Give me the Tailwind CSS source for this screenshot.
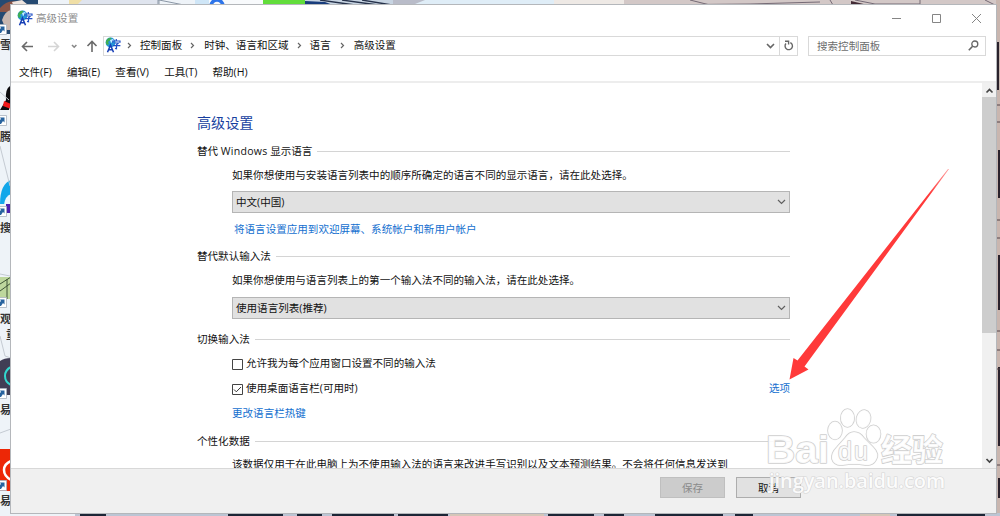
<!DOCTYPE html>
<html lang="zh-CN">
  <head>
    <meta charset="UTF-8" />
    <meta name="viewport" content="width=device-width, initial-scale=1.0" />
    <title>高级设置</title>
    <script src="https://cdn.jsdelivr.net/npm/@tailwindcss/browser@4"></script>
  </head>
  <body
    class="relative w-[1000px] h-[516px] overflow-hidden bg-[#eef3f8] font-['Open_Sans','Noto_Sans_CJK_SC',sans-serif] text-[10.55px] leading-4 text-[#111] whitespace-nowrap"
  >
    <!-- desktop behind the window -->
    <svg class="absolute inset-0" width="1000" height="516" viewBox="0 0 1000 516">
      <rect width="38" height="34" fill="#264a72" />
      <path d="M0 8q10-12 24-3l6 7H0z" fill="#8a5446" />
      <path d="M12 2l10-2 6 5-14 2z" fill="#efe5df" />
      <path d="M2 20q3-9 9-10v20H6z" fill="#c9b7b0" />
      <rect x="38" width="31" height="6" fill="#eef3f8" />
      <path d="M69 0h89v6H69z" fill="#f0dfa6" />
      <path d="M82 0h76v6H76z" fill="#dfe4ee" />
      <path d="M158 0h1v6h-1zM159 0l30 6" stroke="#8b97a6" fill="none" />
      <rect x="195" width="14" height="6" fill="#cfe6f7" />
      <rect x="209" width="54" height="6" fill="#f8fafc" />
      <circle cx="217" cy="6" r="6" fill="none" stroke="#2d74ea" stroke-width="3.5" />
      <rect x="263" width="42" height="6" fill="#62dd3b" />
      <path d="M305 0h90v6h-90z" fill="#c7d4e2" />
      <path d="M305 1l20 1 8 3h-28z" fill="#183c7c" />
      <path d="M320 0l35 5M342 0l36 5M362 0l30 5" stroke="#26324b" stroke-width="1.3" />
      <path d="M393 0h38l-14 6h-24z" fill="#b9bcc9" />
      <path d="M425 0h129v6H410z" fill="#dfedf7" />
      <path d="M554 0h446v6H554z" fill="#d3c8c7" />
      <path d="M554 0h70v6h-70z" fill="#eee9e5" />
      <path d="M640 5l110-1 70-2M690 0l20 5M830 0l3 5M855 0l20 4h45v-4M985 0l10 5" stroke="#756a75" fill="none" />
      <path d="M851 1l17 4h-17z" fill="#432b35" />

      <path d="M10 86q-5 3-4 14l-6 10h11V86z" fill="#0b0b0e" />
      <path d="M4 101l7 3v5l-8-3z" fill="#f01819" />
      <path d="M11 106q-4 4-2 13l2 2z" fill="#f6f6f4" />
      <path d="M11 180q-11 4-11 24h11z" fill="#12a7ea" />
      <path d="M11 194q-6 2-7 11l7 7z" fill="#eef6fd" />
      <path d="M6 204h5v9H6z" fill="#4b1fb0" />
      <path d="M0 277h11v22H0z" fill="#bdd79d" />
      <path d="M0 284l11-7M0 291l11-8M7 279v20" stroke="#3e5537" fill="none" />
      <path d="M0 361q4-3 11-3v37H0z" fill="#403d55" />
      <path d="M11 367q-6 3-6 9t6 9" stroke="#32d7cf" stroke-width="2" fill="none" />
      <path d="M0 449h11v42H0z" fill="#ed2706" />
      <path d="M11 461q-7 3-7 9t7 10" stroke="#fff" stroke-width="2.5" fill="none" />
      <path d="M0 92l9 8M0 146l10 40M0 274l10 2M0 336l5 20 6 2M0 433l11-4" stroke="#c4cad2" fill="none" />
      <g id="shortcut">
        <path d="M0 115.500h6.500v10H0" fill="#fff" stroke="#aab3bf" stroke-width=".8" />
        <path d="M0 117.500h4.500v5L3 121l-2 3H0v-4l1-1z" fill="#27639f" />
      </g>
      <use href="#shortcut" y="91" />
      <use href="#shortcut" y="182" />
      <use href="#shortcut" y="273" />
      <use href="#shortcut" y="365" />
      <use href="#shortcut" y="-91" />
      <g font-size="11" font-weight="bold" fill="#333" font-family="'Noto Sans CJK SC', sans-serif">
        <text x="0" y="49">雪</text>
        <text x="0" y="141">腾</text>
        <text x="0" y="232">搜</text>
        <text x="0" y="323">观</text>
        <text x="6" y="339">重</text>
        <text x="0" y="414">易</text>
        <text x="0" y="505">易</text>
      </g>

      <!-- brick wall showing on the right -->
      <rect x="996" width="4" height="516" fill="#c9b6af" />
      <path
        d="M998 42v48M999 150v48M999 255v55M999 367v20M999 386v60M999 478v20"
        stroke="#2a222c"
        stroke-width="2"
      />
      <path d="M996 105h4M996 122h4M996 220h4M996 238h4M996 331h4M996 350h4M996 369h4M996 465h4" stroke="#54454a" />

      <rect y="513" width="1000" height="3" fill="#bcc5d4" />
      <path d="M0 513h75v3H0z" fill="#eef3f8" />
      <path
        d="M80 515h26M228 515h55M297 515h25M332 515h62M398 515h50M548 515h46M604 515h20M655 515h68M735 515h18M897 515h88"
        stroke="#1c2636"
        stroke-width="3"
      />
      <path d="M450 515h94M860 515h30" stroke="#d5c6b8" stroke-width="2" />
    </svg>

    <div class="absolute left-[10px] top-1 w-[987px] h-[510px] border border-[#b4b7bb] bg-white flex flex-col">
      <!-- title bar -->
      <header class="h-[26px] shrink-0 flex items-center pl-1.5 pr-[14px] text-[#8d8d8d]">
        <svg class="w-4 h-4" viewBox="0 0 16 16">
          <g id="lang">
            <circle cx="5.500" cy="5.500" r="4.900" fill="#2496d8" />
            <path d="M1.500 3q2-3 5-2L5 3.500 3 5l1 2-2 1Q0 6 1.500 3z" fill="#3fae52" />
            <path d="M5 3l3-1 1 2-3 2z" fill="#c4f0ff" />
            <path d="M2.500 15.200L5.500 8l3 7.200M3.600 12.700h3.900" fill="none" stroke="#163eb5" stroke-width="1.500" />
            <path
              d="M11.300 2v1.500M7.800 5.800V4h7.200v1.800M9.300 6h4L11.500 7.700v4.100l-1.500-.4M8 8.700h7.400"
              fill="none"
              stroke="#2350c6"
              stroke-width="1.200"
            />
          </g>
        </svg>
        <span class="ml-[3px]">高级设置</span>
        <div class="ml-auto flex items-center gap-[29px]">
          <svg class="w-[11px] h-[11px]" viewBox="0 0 11 11"><path d="M1 5.500h9" stroke="#858585" /></svg>
          <svg class="w-[11px] h-[11px]" viewBox="0 0 11 11"><path d="M1.500 1.500h8v8h-8z" fill="none" stroke="#858585" /></svg>
          <svg class="w-[11px] h-[11px]" viewBox="0 0 11 11"><path d="M1 1l9 9M10 1l-9 9" stroke="#858585" /></svg>
        </div>
      </header>

      <!-- navigation -->
      <nav class="h-[29px] shrink-0 flex items-center pl-2.5 pr-2.5">
        <svg class="w-[82px] h-5 shrink-0" viewBox="0 0 82 20" fill="none" stroke-width="1.600">
          <path d="M12 10.500H1.500M6 6l-4.500 4.500L6 15" stroke="#6a6a6a" />
          <path d="M27 10.500h10.500M33 6l4.500 4.500L33 15" stroke="#d5d5d5" />
          <path d="M51 9l2.200 2.200L55.400 9" stroke="#888" />
          <path d="M71 16V5.500M66.500 10L71 5.500l4.500 4.500" stroke="#6a6a6a" />
        </svg>
        <div class="w-[695px] h-5 border border-[#d9d9d9] flex items-center">
          <svg class="w-4 h-4 ml-px -mt-px" viewBox="0 0 16 16"><use href="#lang" /></svg>
          <svg class="w-[5px] h-[7px] ml-[6px] mr-2" viewBox="0 0 5 7"><path d="M1 1l2.500 2.500L1 6" fill="none" stroke="#666" stroke-width="1.200" /></svg>
          <span class="-mt-0.5">控制面板</span>
          <svg class="w-[5px] h-[7px] ml-2 mr-[9px]" viewBox="0 0 5 7"><path d="M1 1l2.500 2.500L1 6" fill="none" stroke="#666" stroke-width="1.200" /></svg>
          <span class="-mt-0.5">时钟、语言和区域</span>
          <svg class="w-[5px] h-[7px] mx-2" viewBox="0 0 5 7"><path d="M1 1l2.500 2.500L1 6" fill="none" stroke="#666" stroke-width="1.200" /></svg>
          <span class="-mt-0.5">语言</span>
          <svg class="w-[5px] h-[7px] ml-[9px] mr-[9px]" viewBox="0 0 5 7"><path d="M1 1l2.500 2.500L1 6" fill="none" stroke="#666" stroke-width="1.200" /></svg>
          <span class="-mt-0.5">高级设置</span>
          <svg class="w-[9px] h-[6px] ml-auto mr-1" viewBox="0 0 9 6"><path d="M1 1l3.500 3.500L8 1" fill="none" stroke="#666" stroke-width="1.600" /></svg>
          <div class="w-[18px] h-full border-l border-[#d9d9d9] flex items-center justify-center">
            <svg class="w-[10px] h-[11px]" viewBox="0 0 10 11">
              <path d="M6.300 2.600A3.700 3.700 0 1 1 2 3.500M1 1.200h3.600v3.400" fill="none" stroke="#666" stroke-width="1.400" />
            </svg>
          </div>
        </div>
        <div class="ml-[10px] w-[178px] h-5 border border-[#d9d9d9] flex items-center justify-between pl-2 pr-[6px] text-[#6d6d6d]">
          <span>搜索控制面板</span>
          <svg class="w-[11px] h-[11px]" viewBox="0 0 11 11">
            <circle cx="6.800" cy="4" r="3" fill="none" stroke="#666" stroke-width="1.300" />
            <path d="M4.600 6.200L.8 10.200" stroke="#666" stroke-width="1.600" />
          </svg>
        </div>
      </nav>

      <div class="h-[23px] shrink-0 border-b-2 border-[#ededed] flex items-center gap-[15.200px] pl-2 pt-0.5">
        <span>文件(F)</span>
        <span>编辑(E)</span>
        <span>查看(V)</span>
        <span>工具(T)</span>
        <span>帮助(H)</span>
      </div>

      <!-- page -->
      <div class="h-[385px] shrink-0 flex overflow-hidden">
        <main class="flex-1 pl-[186px] pt-[30px]">
          <div class="w-[593px]">
            <h1 class="h-5 leading-5 text-[14.1px] text-[#173f9f]">高级设置</h1>

            <h2 class="mt-[10px] h-4 flex items-center gap-[5px] after:h-px after:flex-1 after:bg-[#d4d4d4]">
              <span>替代 <span class="tracking-[.25px]">Windows</span> 显示语言</span>
            </h2>
            <div class="pl-[35px]">
              <p class="mt-2 h-4">如果你想使用与安装语言列表中的顺序所确定的语言不同的显示语言，请在此处选择。</p>
              <div class="mt-2 h-[22px] border border-[#b5b5b5] bg-[#e1e1e1] flex items-center justify-between pl-[3px] pr-[3px]">
                <span>中文(中国)</span>
                <svg class="w-[9px] h-[6px]" viewBox="0 0 9 6"><path d="M1 1l3.500 3.500L8 1" fill="none" stroke="#606060" stroke-width="1.200" /></svg>
              </div>
              <p class="mt-2 h-4 pl-[2px] text-[#146fcf]">将语言设置应用到欢迎屏幕、系统帐户和新用户帐户</p>
            </div>

            <h2 class="mt-[11px] h-4 flex items-center gap-[5px] after:h-px after:flex-1 after:bg-[#d4d4d4]">替代默认输入法</h2>
            <div class="pl-[35px]">
              <p class="mt-2 h-4">如果你想使用与语言列表上的第一个输入法不同的输入法，请在此处选择。</p>
              <div class="mt-[9px] h-[22px] border border-[#b5b5b5] bg-[#e1e1e1] flex items-center justify-between pl-[3px] pr-[3px]">
                <span>使用语言列表(推荐)</span>
                <svg class="w-[9px] h-[6px]" viewBox="0 0 9 6"><path d="M1 1l3.500 3.500L8 1" fill="none" stroke="#606060" stroke-width="1.200" /></svg>
              </div>
            </div>

            <h2 class="mt-3 h-4 flex items-center gap-[5px] after:h-px after:flex-1 after:bg-[#d4d4d4]">切换输入法</h2>
            <div class="pl-[35px]">
              <div class="mt-2 h-4 flex items-center gap-[3px]">
                <svg class="w-[11px] h-[11px] mt-[3px]" viewBox="0 0 11 11"><path d="M.5.500h10v10H.5z" fill="#fff" stroke="#444" /></svg>
                <span>允许我为每个应用窗口设置不同的输入法</span>
              </div>
              <div class="mt-[9px] h-4 flex items-center gap-[3px]">
                <svg class="w-[11px] h-[11px] mt-[3px]" viewBox="0 0 11 11">
                  <path d="M.5.500h10v10H.5z" fill="#fff" stroke="#444" />
                  <path d="M2 5.500l2.300 2.300L9 3" fill="none" stroke="#333" />
                </svg>
                <span>使用桌面语言栏(可用时)</span>
                <span class="ml-auto text-[#146fcf]">选项</span>
              </div>
              <p class="mt-[9px] h-4 text-[#146fcf]">更改语言栏热键</p>
            </div>

            <h2 class="mt-3 h-4 flex items-center gap-[5px] after:h-px after:flex-1 after:bg-[#d4d4d4]">个性化数据</h2>
            <p class="mt-[7px] h-4 pl-[35px]">该数据仅用于在此电脑上为不使用输入法的语言来改进手写识别以及文本预测结果。不会将任何信息发送到</p>
          </div>
        </main>
        <div class="w-[14px] bg-[#f0f0f0] flex flex-col items-center">
          <svg class="h-[14px] w-[9px] shrink-0" viewBox="0 0 9 14"><path d="M1.500 9.500l3-3 3 3" fill="none" stroke="#444" stroke-width="1.700" /></svg>
          <div class="w-full h-[236px] bg-[#cdcdcd]"></div>
          <svg class="mt-auto h-[14px] w-[9px] shrink-0" viewBox="0 0 9 14"><path d="M1.500 5l3 3 3-3" fill="none" stroke="#444" stroke-width="1.700" /></svg>
        </div>
      </div>

      <footer class="flex-1 border-t border-[#d8d8d8] bg-[#f0f0f0] flex items-start gap-[11px] pl-[649px] pt-2">
        <button class="w-[65px] h-[21px] border border-[#bfbfbf] bg-[#cccccc] text-[#8a8a8a]">保存</button>
        <button class="w-[65px] h-[21px] border border-[#adadad] bg-[#e1e1e1]">取消</button>
      </footer>
    </div>

    <!-- arrow and watermark overlay -->
    <svg class="absolute inset-0" width="1000" height="516" viewBox="0 0 1000 516">
      <defs>
        <linearGradient id="fade" gradientUnits="userSpaceOnUse" x1="948" y1="169" x2="930" y2="194">
          <stop stop-color="#ff3a3a" stop-opacity=".5" />
          <stop offset="1" stop-color="#ff3a3a" />
        </linearGradient>
      </defs>
      <path d="M949 169L804.500 366.500L808.500 369.500L789.500 379.500L793.500 358L797.500 360.500L948 169Z" fill="url(#fade)" />
      <g fill="#fff" fill-opacity=".9" stroke="#cfcfcf" stroke-width="1.600" stroke-linejoin="round" paint-order="stroke">
        <text x="766" y="463" font-family="'Liberation Sans', sans-serif" font-size="39" font-weight="bold" textLength="63" lengthAdjust="spacingAndGlyphs">Bai</text>
        <ellipse cx="835" cy="430.500" rx="7" ry="9" />
        <ellipse cx="847.500" cy="418" rx="6.700" ry="9" />
        <ellipse cx="863.500" cy="419" rx="7" ry="9" transform="rotate(12 863.500 419)" />
        <ellipse cx="873.500" cy="434" rx="7" ry="8.700" />
        <path d="M854 432q6 0 10 6l9 9q7 7 3 13-3 6-11 5-11-2-22 0-9 1-11-6-1-6 5-12l8-9q4-6 9-6z" />
        <text x="838" y="460" font-family="'Liberation Sans', sans-serif" font-size="25" textLength="30">du</text>
        <text x="881" y="461" font-family="'Noto Sans CJK SC', sans-serif" font-size="31" font-weight="bold" textLength="62">经验</text>
      </g>
      <text
        x="769"
        y="488"
        font-family="'Open Sans', sans-serif"
        font-size="20"
        font-weight="600"
        textLength="176"
        fill="#fff"
        fill-opacity=".9"
        stroke="#d6d6d6"
        stroke-width="1.200"
        paint-order="stroke"
      >jingyan.baidu.com</text>
    </svg>
  </body>
</html>
